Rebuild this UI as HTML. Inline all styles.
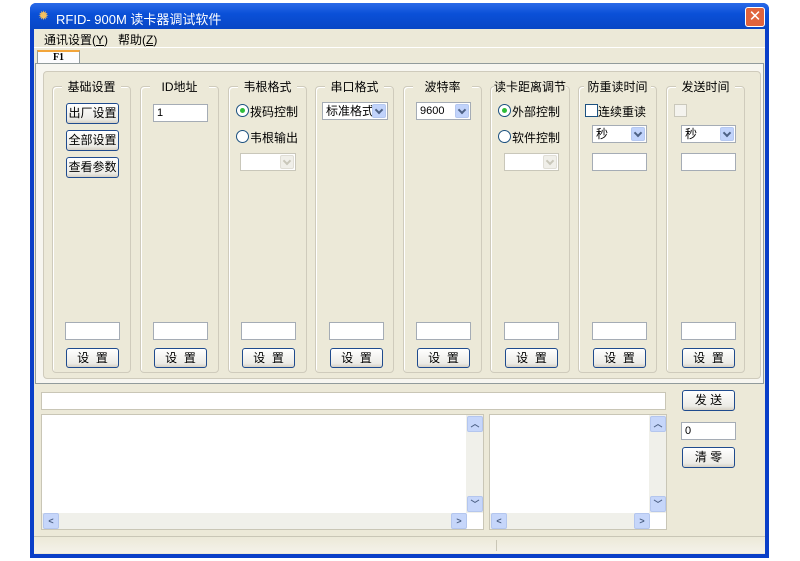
<!DOCTYPE html>
<html><head><meta charset="utf-8"><style>
*{box-sizing:border-box;margin:0;padding:0}
body{width:800px;height:561px;background:#fff;position:relative;overflow:hidden;font-family:"Liberation Sans","Noto Sans CJK SC",sans-serif;font-size:12px;color:#000}
.a{position:absolute}
.win{left:30px;top:3px;width:739px;height:555px;background:#0a3fc8;border-radius:6px 6px 0 0}
.title{left:30px;top:3px;width:739px;height:27px;background:linear-gradient(#2a6ae8,#0a50d8 40%,#0846c4);border-radius:6px 6px 0 0;color:#fff;font-size:13px}
.body{left:34px;top:29px;width:731px;height:525px;background:#ece9d8}
.in{background:#fff;border:1px solid #a5acb5;height:18px;font-size:11px;padding:2px 3px}
.btn{background:linear-gradient(#fff,#ecebe6 80%,#d6d0c5);border:1px solid #1f4b8e;border-radius:3px;text-align:center;font-size:12px;line-height:18px}
.g{border:1px solid #cfcbbc;border-radius:4px;box-shadow:inset 1px 1px 0 #fff}
.gt{background:#ece9d8;padding:0 5px;font-size:12px;text-align:center;white-space:nowrap}
.cb{background:#fff;border:1px solid #a5acb5;height:18px;font-size:12px;padding:1px 3px;line-height:15px}
.cb i{position:absolute;right:1px;top:1px;width:14px;height:14px;background:#c1d3fb;border:1px solid #b5c8f0;border-radius:2px}
.cb i:after{content:"";position:absolute;left:3px;top:2px;width:4px;height:4px;border:solid #4d6185;border-width:0 2px 2px 0;transform:rotate(45deg)}
.cb.d{border-color:#c9c7ba}
.cb.d i{background:#f0efe9;border-color:#e0ded6}
.cb.d i:after{border-color:#c9c7ba}
.rd{width:13px;height:13px;border:1px solid #1c5180;border-radius:50%;background:#fff}
.rd.on:after{content:"";position:absolute;left:3px;top:3px;width:5px;height:5px;border-radius:50%;background:#2fbd3a}
.sb{background:#f0f0ea}
.sbt{width:16px;height:16px;background:#c6d6fa;border:1px solid #b4c6ee;border-radius:2px;font-size:9px;color:#4d6185;text-align:center;line-height:14px;font-weight:bold}
</style></head><body>
<div class="a win"></div>
<div class="a title"><span class="a" style="left:8px;top:5px;color:#f3c060">✹</span><span class="a" style="left:26px;top:6px">RFID- 900M 读卡器调试软件</span>
<div class="a" style="left:715px;top:4px;width:20px;height:20px;background:#e0643d;border:1px solid #fff;border-radius:3px;color:#fff;text-align:center;line-height:18px;font-size:15px">✕</div></div>
<div class="a body"></div>
<div class="a" style="left:44px;top:31px;font-size:12px">通讯设置(<u>Y</u>)&nbsp;&nbsp; 帮助(<u>Z</u>)</div>
<div class="a" style="left:34px;top:47px;width:731px;height:1px;background:#fff"></div>
<div class="a" style="left:37px;top:50px;width:43px;height:14px;background:#fcfcfe;border:1px solid #919b9c;border-bottom:none;border-top:2px solid #f2a43a;text-align:center;font-size:10px;font-weight:bold;font-family:'Liberation Serif',serif;line-height:11px">F1</div>
<div class="a" style="left:35px;top:63px;width:729px;height:321px;border:1px solid #919b9c;background:#f7f6f0"></div>
<div class="a" style="left:43px;top:71px;width:718px;height:308px;border:1px solid #cfcbbc;border-radius:4px;background:#ece9d8"></div>

<div class="a g" style="left:52px;top:86px;width:79px;height:287px"></div>
<div class="a g" style="left:140px;top:86px;width:79px;height:287px"></div>
<div class="a g" style="left:228px;top:86px;width:79px;height:287px"></div>
<div class="a g" style="left:315px;top:86px;width:79px;height:287px"></div>
<div class="a g" style="left:403px;top:86px;width:79px;height:287px"></div>
<div class="a g" style="left:490px;top:86px;width:80px;height:287px"></div>
<div class="a g" style="left:578px;top:86px;width:79px;height:287px"></div>
<div class="a g" style="left:666px;top:86px;width:79px;height:287px"></div>
<div class="a gt" style="left:62px;top:78px;width:59px">基础设置</div>
<div class="a gt" style="left:150px;top:78px;width:59px">ID地址</div>
<div class="a gt" style="left:238px;top:78px;width:59px">韦根格式</div>
<div class="a gt" style="left:325px;top:78px;width:59px">串口格式</div>
<div class="a gt" style="left:413px;top:78px;width:59px">波特率</div>
<div class="a gt" style="left:494px;top:78px;width:72px;padding:0">读卡距离调节</div>
<div class="a gt" style="left:584px;top:78px;width:67px;padding:0">防重读时间</div>
<div class="a gt" style="left:676px;top:78px;width:59px">发送时间</div>

<div class="a btn" style="left:66px;top:103px;width:53px;height:21px">出厂设置</div>
<div class="a btn" style="left:66px;top:130px;width:53px;height:21px">全部设置</div>
<div class="a btn" style="left:66px;top:157px;width:53px;height:21px">查看参数</div>

<div class="a in" style="left:153px;top:104px;width:55px">1</div>

<div class="a rd on" style="left:236px;top:104px"></div><div class="a" style="left:250px;top:103px">拨码控制</div>
<div class="a rd" style="left:236px;top:130px"></div><div class="a" style="left:250px;top:129px">韦根输出</div>
<div class="a cb d" style="left:240px;top:153px;width:56px"><i></i></div>

<div class="a cb" style="left:322px;top:102px;width:66px">标准格式<i></i></div>
<div class="a cb" style="left:416px;top:102px;width:55px;font-size:11px">9600<i></i></div>

<div class="a rd on" style="left:498px;top:104px"></div><div class="a" style="left:512px;top:103px">外部控制</div>
<div class="a rd" style="left:498px;top:130px"></div><div class="a" style="left:512px;top:129px">软件控制</div>
<div class="a cb d" style="left:504px;top:153px;width:55px"><i></i></div>

<div class="a" style="left:585px;top:104px;width:13px;height:13px;border:1px solid #1c5180;background:#fff"></div><div class="a" style="left:598px;top:103px">连续重读</div>
<div class="a cb" style="left:592px;top:125px;width:55px">秒<i></i></div>
<div class="a in" style="left:592px;top:153px;width:55px"></div>

<div class="a" style="left:674px;top:104px;width:13px;height:13px;border:1px solid #cac8bb;background:#f4f3ee"></div>
<div class="a cb" style="left:681px;top:125px;width:55px">秒<i></i></div>
<div class="a in" style="left:681px;top:153px;width:55px"></div>

<div class="a in" style="left:65px;top:322px;width:55px"></div><div class="a btn" style="left:66px;top:348px;width:53px;height:20px">设&nbsp;&nbsp;置</div>
<div class="a in" style="left:153px;top:322px;width:55px"></div><div class="a btn" style="left:154px;top:348px;width:53px;height:20px">设&nbsp;&nbsp;置</div>
<div class="a in" style="left:241px;top:322px;width:55px"></div><div class="a btn" style="left:242px;top:348px;width:53px;height:20px">设&nbsp;&nbsp;置</div>
<div class="a in" style="left:329px;top:322px;width:55px"></div><div class="a btn" style="left:330px;top:348px;width:53px;height:20px">设&nbsp;&nbsp;置</div>
<div class="a in" style="left:416px;top:322px;width:55px"></div><div class="a btn" style="left:417px;top:348px;width:53px;height:20px">设&nbsp;&nbsp;置</div>
<div class="a in" style="left:504px;top:322px;width:55px"></div><div class="a btn" style="left:505px;top:348px;width:53px;height:20px">设&nbsp;&nbsp;置</div>
<div class="a in" style="left:592px;top:322px;width:55px"></div><div class="a btn" style="left:593px;top:348px;width:53px;height:20px">设&nbsp;&nbsp;置</div>
<div class="a in" style="left:681px;top:322px;width:55px"></div><div class="a btn" style="left:682px;top:348px;width:53px;height:20px">设&nbsp;&nbsp;置</div>

<div class="a in" style="left:41px;top:392px;width:625px;height:18px;border-color:#c9c6b6"></div>
<div class="a btn" style="left:682px;top:390px;width:53px;height:21px">发&nbsp;送</div>
<div class="a in" style="left:681px;top:422px;width:55px">0</div>
<div class="a btn" style="left:682px;top:447px;width:53px;height:21px">清&nbsp;零</div>

<div class="a" style="left:41px;top:414px;width:443px;height:116px;background:#fff;border:1px solid #c9c6b6"></div>
<div class="a sb" style="left:466px;top:415px;width:17px;height:98px"></div>
<div class="a sb" style="left:42px;top:513px;width:424px;height:16px"></div>
<div class="a sbt" style="left:467px;top:416px">︿</div>
<div class="a sbt" style="left:467px;top:496px">﹀</div>
<div class="a sbt" style="left:43px;top:513px">&lt;</div>
<div class="a sbt" style="left:451px;top:513px">&gt;</div>

<div class="a" style="left:489px;top:414px;width:178px;height:116px;background:#fff;border:1px solid #c9c6b6"></div>
<div class="a sb" style="left:649px;top:415px;width:17px;height:98px"></div>
<div class="a sb" style="left:490px;top:513px;width:159px;height:16px"></div>
<div class="a sbt" style="left:650px;top:416px">︿</div>
<div class="a sbt" style="left:650px;top:496px">﹀</div>
<div class="a sbt" style="left:491px;top:513px">&lt;</div>
<div class="a sbt" style="left:634px;top:513px">&gt;</div>

<div class="a" style="left:34px;top:536px;width:731px;height:1px;background:#c9c6b6"></div>
<div class="a" style="left:34px;top:537px;width:731px;height:16px;background:linear-gradient(#ece9d8,#f4f2ea)"></div>
<div class="a" style="left:496px;top:540px;width:1px;height:11px;background:#c9c6b6"></div>
</body></html>
